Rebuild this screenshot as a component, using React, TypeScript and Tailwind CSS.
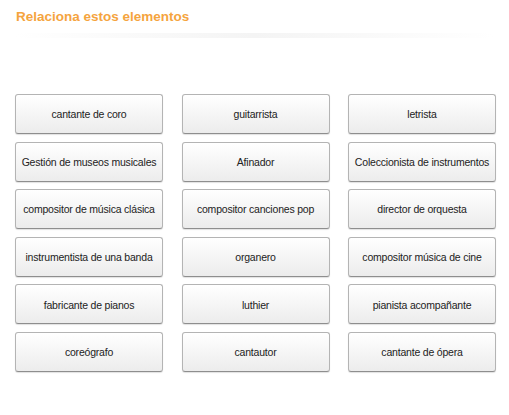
const items = [
  "cantante de coro",
  "guitarrista",
  "letrista",
  "Gestión de museos musicales",
  "Afinador",
  "Coleccionista de instrumentos",
  "compositor de música clásica",
  "compositor canciones pop",
  "director de orquesta",
  "instrumentista de una banda",
  "organero",
  "compositor música de cine",
  "fabricante de pianos",
  "luthier",
  "pianista acompañante",
  "coreógrafo",
  "cantautor",
  "cantante de ópera",
];

export default function App() {
  return (
    <div className="h-[415px] w-[509px] bg-white font-['Liberation_Sans',Arial,sans-serif]">
      <div className="px-[16px] pt-[9px]">
        <h1 className="text-[13.5px] font-bold leading-[16px] text-[#f5a43e]">
          Relaciona estos elementos
        </h1>
      </div>
      {/* soft shadow rule under the title */}
      <div className="mx-[14px] mt-[8px] h-[5px] bg-gradient-to-r from-transparent via-[#f4f4f4] to-transparent" />

      <div className="ml-[15px] mt-[56px] grid w-[481px] grid-cols-3 gap-x-[18.5px] gap-y-[7.6px]">
        {items.map((t) => (
          <button
            key={t}
            className="flex h-[40px] items-center justify-center whitespace-nowrap rounded-[3px] border border-[#b4b4b4] border-b-[#8e8e8e] bg-gradient-to-b from-white to-[#ececec] pt-[2px] text-[10.5px] tracking-[-0.2px] text-[#222] shadow-[0_1px_1px_rgba(0,0,0,0.12)]"
          >
            {t}
          </button>
        ))}
      </div>
    </div>
  );
}
